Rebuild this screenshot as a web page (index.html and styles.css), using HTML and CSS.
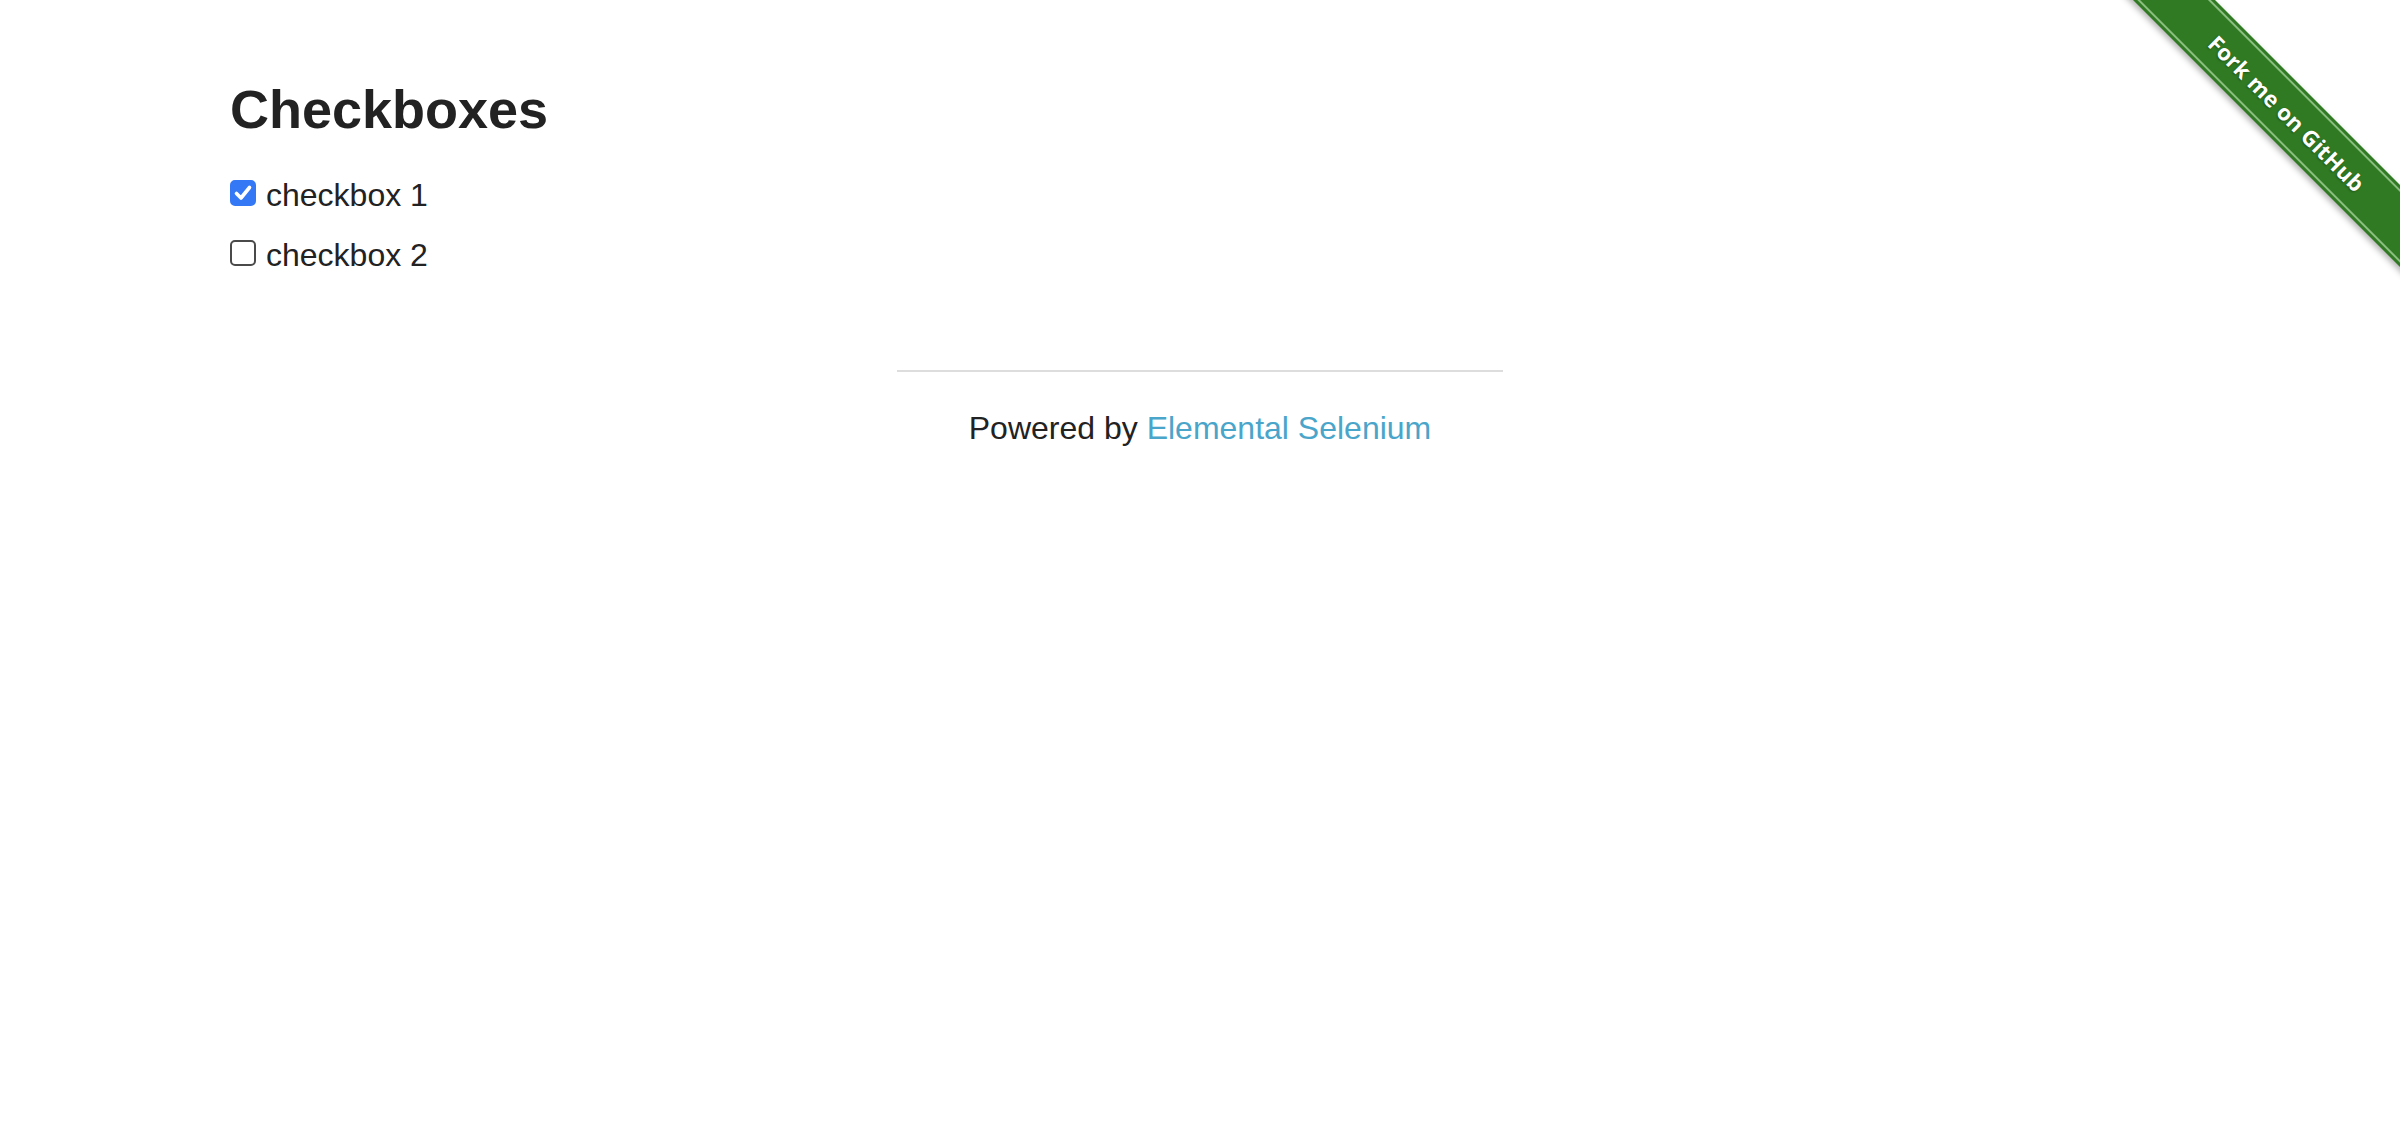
FILE: index.html
```html
<!DOCTYPE html>
<html lang="en">
<head>
<meta charset="utf-8">
<title>The Internet</title>
<link rel="stylesheet" href="styles.css">
</head>
<body>
<div class="ribbon-wrap">
  <a class="ribbon" href="#"><span class="ribbon-inner"><span class="ribbon-text">Fork me on GitHub</span></span></a>
</div>
<div class="row">
  <div class="content">
    <h3 class="title">Checkboxes</h3>
    <form class="checks">
      <label class="check-row"><span class="box checked"><svg viewBox="0 0 26 26" width="26" height="26"><path d="M6.5 13.5 L11 18 L19.5 7.5" fill="none" stroke="#fff" stroke-width="3.6" stroke-linecap="round" stroke-linejoin="round"/></svg></span>checkbox 1</label>
      <label class="check-row"><span class="box"></span>checkbox 2</label>
    </form>
  </div>
</div>
<div class="footer">
  <div class="footer-col">
    <hr class="rule">
    <div class="powered">Powered by <a class="link" href="#">Elemental Selenium</a></div>
  </div>
</div>
</body>
</html>
```
FILE: styles.css
```css
html, body {
  margin: 0;
  padding: 0;
  background: #fff;
}
body {
  font-family: "Liberation Sans", Arial, Helvetica, sans-serif;
  color: #222;
  font-size: 32px;
}
.row {
  width: 2000px;
  margin: 0 auto;
}
.content {
  padding: 77px 30px 0 30px;
}
.title {
  margin: 0 0 23px 0;
  font-size: 54px;
  font-weight: bold;
  line-height: 1.2;
  color: #222;
}
.checks {
  margin: 0;
}
.check-row {
  display: block;
  height: 60px;
  line-height: 60px;
  font-size: 32px;
  color: #222;
}
.box {
  display: inline-block;
  width: 26px;
  height: 26px;
  box-sizing: border-box;
  border: 2px solid #4a4a4a;
  border-radius: 5px;
  background: #fff;
  margin-right: 10px;
  vertical-align: baseline;
  position: relative;
}
.box.checked {
  background: #3478f6;
  border-color: #3478f6;
}
.box svg {
  position: absolute;
  left: -2px;
  top: -2px;
  display: block;
}
.footer {
  width: 2000px;
  margin: 85px auto 0 auto;
  display: flex;
  justify-content: center;
}
.footer-col {
  width: 606px;
}
.rule {
  border: 0;
  height: 2px;
  background: #ddd;
  margin: 0 0 32px 0;
}
.powered {
  text-align: center;
  line-height: 48px;
  font-size: 32px;
  color: #222;
}
.link {
  color: #4aa5ca;
  text-decoration: none;
}
.ribbon-wrap {
  position: absolute;
  top: 0;
  right: 0;
  width: 298px;
  height: 298px;
  overflow: hidden;
}
.ribbon {
  position: absolute;
  left: -45px;
  top: 84px;
  width: 460px;
  height: 58px;
  box-sizing: border-box;
  padding: 3px 0;
  background: #2f7a22;
  transform: rotate(45deg);
  box-shadow: 0 3px 6px rgba(0,0,0,0.3);
  display: flex;
  text-decoration: none;
}
.ribbon-inner {
  flex: 1;
  display: flex;
  align-items: center;
  justify-content: center;
  border-top: 2px solid rgba(170, 215, 160, 0.75);
  border-bottom: 2px solid rgba(170, 215, 160, 0.75);
}
.ribbon-text {
  color: #fff;
  font-family: "Open Sans", "DejaVu Sans", sans-serif;
  font-weight: 700;
  font-size: 22px;
  letter-spacing: 0.2px;
  text-shadow: 0 1px 2px rgba(0,0,0,0.35);
}
```
